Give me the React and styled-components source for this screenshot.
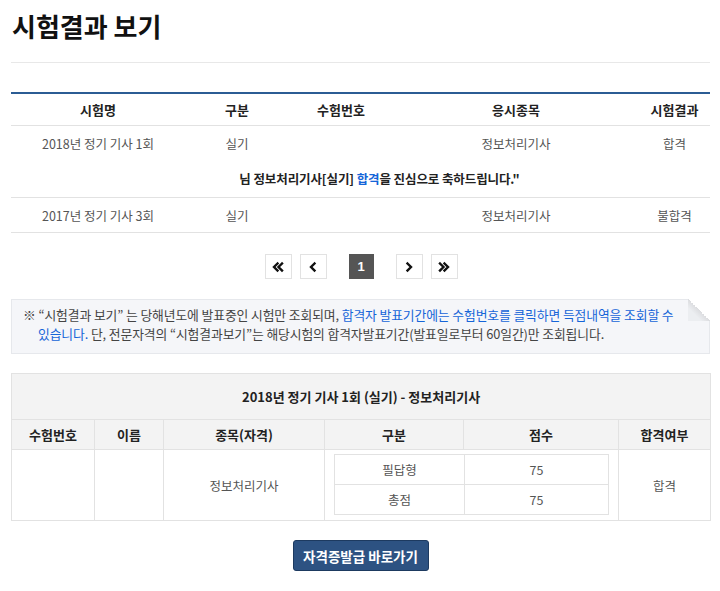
import styled, { createGlobalStyle } from 'styled-components';

const GlobalStyle = createGlobalStyle`
  body {
    margin: 0;
    background: #fff;
    font-family: 'Noto Sans CJK KR', 'Noto Sans', sans-serif;
    color: #333;
  }
`;

const history = [
  { name: '2018년 정기 기사 1회', type: '실기', no: '', subject: '정보처리기사', result: '합격', message: true },
  { name: '2017년 정기 기사 3회', type: '실기', no: '', subject: '정보처리기사', result: '불합격' },
];

function Chevron({ dir, double }) {
  const flip = dir === 'left' ? 'scale(-1,1) translate(-12,0)' : undefined;
  return (
    <svg width="12" height="12" viewBox="0 0 12 12">
      <g transform={flip} fill="none" stroke="#111" strokeWidth="2.4" strokeLinecap="square">
        {double ? (
          <>
            <path d="M2 2.5 L5.5 6 L2 9.5" />
            <path d="M6.5 2.5 L10 6 L6.5 9.5" />
          </>
        ) : (
          <path d="M4.5 2.5 L8 6 L4.5 9.5" />
        )}
      </g>
    </svg>
  );
}

function App() {
  return (
    <Page>
      <GlobalStyle />
      <Title>시험결과 보기</Title>

      <HistoryTable>
        <colgroup>
          <col style={{ width: 174 }} />
          <col style={{ width: 104 }} />
          <col style={{ width: 104 }} />
          <col style={{ width: 246 }} />
          <col style={{ width: 71 }} />
        </colgroup>
        <thead>
          <tr>
            <HeadCell>시험명</HeadCell>
            <HeadCell>구분</HeadCell>
            <HeadCell>수험번호</HeadCell>
            <HeadCell>응시종목</HeadCell>
            <HeadCell>시험결과</HeadCell>
          </tr>
        </thead>
        <tbody>
          {history.map((row, i) => (
            <>
              <tr key={'r' + i}>
                <BodyCell $plain={row.message}>{row.name}</BodyCell>
                <BodyCell $plain={row.message}>{row.type}</BodyCell>
                <BodyCell $plain={row.message}>{row.no}</BodyCell>
                <BodyCell $plain={row.message}>{row.subject}</BodyCell>
                <BodyCell $plain={row.message}>{row.result}</BodyCell>
              </tr>
              {row.message && (
                <tr key={'m' + i}>
                  <MessageCell colSpan={5}>
                    님 정보처리기사[실기] <Blue>합격</Blue>을 진심으로 축하드립니다."
                  </MessageCell>
                </tr>
              )}
            </>
          ))}
        </tbody>
      </HistoryTable>

      <Pager>
        <PagerGroup>
          <PageButton><Chevron dir="left" double /></PageButton>
          <PageButton><Chevron dir="left" /></PageButton>
        </PagerGroup>
        <PageNumber>1</PageNumber>
        <PagerGroup>
          <PageButton><Chevron dir="right" /></PageButton>
          <PageButton><Chevron dir="right" double /></PageButton>
        </PagerGroup>
      </Pager>

      <Notice>
        ※ “시험결과 보기” 는 당해년도에 발표중인 시험만 조회되며,{' '}
        <Blue>합격자 발표기간에는 수험번호를 클릭하면 득점내역을 조회할 수 있습니다.</Blue>{' '}
        단, 전문자격의 “시험결과보기”는 해당시험의 합격자발표기간(발표일로부터 60일간)만 조회됩니다.
        <Fold />
      </Notice>

      <ResultTable>
        <colgroup>
          <col style={{ width: 83 }} />
          <col style={{ width: 69 }} />
          <col style={{ width: 161 }} />
          <col style={{ width: 139 }} />
          <col style={{ width: 155 }} />
          <col style={{ width: 92 }} />
        </colgroup>
        <thead>
          <tr>
            <Caption colSpan={6}>2018년 정기 기사 1회 (실기) - 정보처리기사</Caption>
          </tr>
          <tr>
            <ResultHead>수험번호</ResultHead>
            <ResultHead>이름</ResultHead>
            <ResultHead>종목(자격)</ResultHead>
            <ResultHead>구분</ResultHead>
            <ResultHead>점수</ResultHead>
            <ResultHead>합격여부</ResultHead>
          </tr>
        </thead>
        <tbody>
          <tr>
            <ResultCell></ResultCell>
            <ResultCell></ResultCell>
            <ResultCell>정보처리기사</ResultCell>
            <ScoreWrap colSpan={2}>
              <ScoreTable>
                <tbody>
                  <tr>
                    <ScoreCell $w={129}>필답형</ScoreCell>
                    <ScoreCell>75</ScoreCell>
                  </tr>
                  <tr>
                    <ScoreCell $w={129}>총점</ScoreCell>
                    <ScoreCell>75</ScoreCell>
                  </tr>
                </tbody>
              </ScoreTable>
            </ScoreWrap>
            <ResultCell>합격</ResultCell>
          </tr>
        </tbody>
      </ResultTable>

      <Actions>
        <PrimaryButton>자격증발급 바로가기</PrimaryButton>
      </Actions>
    </Page>
  );
}

export default App;

const Page = styled.main`
  padding: 0 10px 20px 11px;
`;

const Title = styled.h1`
  margin: 0;
  padding: 9px 0 0 1px;
  height: 53px;
  font-size: 26px;
  line-height: 34px;
  font-weight: 700;
  color: #111;
  border-bottom: 1px solid #e8e8e8;
`;

const HistoryTable = styled.table`
  margin-top: 29px;
  width: 100%;
  border-collapse: collapse;
  table-layout: fixed;
  border-top: 2px solid #2b5c94;
`;

const HeadCell = styled.th`
  height: 31px;
  padding: 0;
  font-size: 13px;
  font-weight: 700;
  color: #222;
  text-align: center;
  border-bottom: 1px solid #e2e2e2;
`;

const BodyCell = styled.td`
  height: 34px;
  padding: 0;
  font-size: 12.5px;
  color: #555;
  text-align: center;
  border-bottom: ${(p) => (p.$plain ? 'none' : '1px solid #e2e2e2')};
`;

const MessageCell = styled.td`
  height: 37px;
  padding: 0 0 0 38px;
  font-size: 12.5px;
  font-weight: 700;
  letter-spacing: -0.1px;
  color: #222;
  text-align: center;
  border-bottom: 1px solid #e2e2e2;
`;

const Blue = styled.span`
  color: #1565d8;
`;

const Pager = styled.nav`
  margin-top: 21px;
  display: flex;
  justify-content: center;
  align-items: center;
  gap: 22px;
  padding-left: 1px;
`;

const PagerGroup = styled.div`
  display: flex;
  gap: 8px;
`;

const PageButton = styled.button`
  width: 27px;
  height: 25px;
  padding: 0;
  display: flex;
  align-items: center;
  justify-content: center;
  background: #fff;
  border: 1px solid #e2e2e2;
`;

const PageNumber = styled.span`
  width: 25px;
  height: 25px;
  display: flex;
  align-items: center;
  justify-content: center;
  background: #555;
  color: #fff;
  font-family: 'Liberation Sans', Arial, sans-serif;
  font-size: 13px;
  font-weight: 700;
`;

const Notice = styled.p`
  position: relative;
  margin: 20px 0 0;
  padding: 5px 32px 10px 26px;
  text-indent: -15px;
  background: #f5f6f9;
  border: 1px solid #e6e8ec;
  font-size: 12.8px;
  line-height: 19px;
  color: #444;
  letter-spacing: -0.1px;
`;

const Fold = styled.span`
  position: absolute;
  top: -1px;
  right: -1px;
  width: 22px;
  height: 22px;
  background: linear-gradient(225deg, #fff 50%, #dcdde0 50%, #eceef1 70%);
`;

const ResultTable = styled.table`
  margin-top: 19px;
  width: 100%;
  border-collapse: collapse;
  table-layout: fixed;
  border: 1px solid #e2e2e2;
`;

const Caption = styled.th`
  height: 45px;
  padding: 0;
  background: #f3f3f3;
  font-size: 13px;
  font-weight: 700;
  color: #222;
  border-bottom: 1px solid #e2e2e2;
`;

const ResultHead = styled.th`
  height: 29px;
  padding: 0;
  background: #f3f3f3;
  font-size: 13px;
  font-weight: 700;
  color: #222;
  border: 1px solid #e2e2e2;
`;

const ResultCell = styled.td`
  height: 70px;
  padding: 0;
  font-size: 12.5px;
  color: #555;
  text-align: center;
  border: 1px solid #e2e2e2;
`;

const ScoreWrap = styled.td`
  padding: 4px 9px 5px 9px;
  border: 1px solid #e2e2e2;
`;

const ScoreTable = styled.table`
  width: 100%;
  border-collapse: collapse;
  table-layout: fixed;
`;

const ScoreCell = styled.td`
  width: ${(p) => (p.$w ? p.$w + 'px' : 'auto')};
  height: 29px;
  padding: 0;
  font-size: 12.5px;
  color: #555;
  text-align: center;
  border: 1px solid #e2e2e2;
`;

const Actions = styled.div`
  margin-top: 19px;
  display: flex;
  justify-content: center;
`;

const PrimaryButton = styled.button`
  width: 136px;
  height: 31px;
  padding: 0;
  background: #2d5282;
  border: 1px solid #1d3a60;
  border-radius: 3px;
  color: #fff;
  font-family: 'Noto Sans CJK KR', sans-serif;
  font-size: 13.5px;
  font-weight: 700;
`;
